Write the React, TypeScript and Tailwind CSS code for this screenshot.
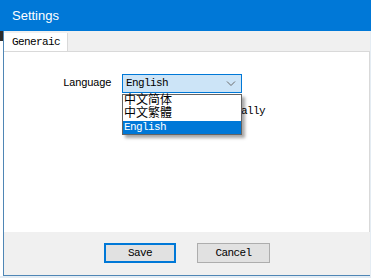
import { useState } from "react";

const mono = { fontFamily: '"Liberation Mono", "Noto Sans CJK SC", monospace' };

export default function App() {
  const [lang, setLang] = useState("English");
  const options = ["中文简体", "中文繁體", "English"];

  return (
    <div className="relative h-[278px] w-[371px] overflow-hidden bg-[#e4ecf3]">
      <div
        className="flex h-[31px] items-center bg-[#0078d7] pl-3 text-[13px] text-white"
        style={{ fontFamily: '"Liberation Sans", Arial, sans-serif' }}
      >
        Settings
      </div>

      <div className="flex">
        <div className="w-[3px] bg-white">
          <div className="h-[10px] bg-[#2b2b2b]" />
        </div>
        <div className="flex h-[245px] w-[367px] flex-col border-b border-l border-[#4f86b5] bg-[#f0f0f0]">
          {/* tabs */}
          <div className="flex h-[20px] items-end">
            <div
              className="flex h-[18px] w-[64px] items-center border-r border-[#d9d9d9] bg-white pl-[8px] text-[11px] tracking-[-0.6px] text-black"
              style={mono}
            >
              Generaic
            </div>
          </div>

          {/* panel */}
          <div className="relative h-[181px] border-r border-t border-[#d9d9d9] bg-white">
            <div className="flex items-center pt-[22px]" style={mono}>
              <span className="ml-[59px] w-[59px] text-[11px] tracking-[-0.6px] text-black">Language</span>
              <div className="relative">
                <div className="flex h-[19px] w-[120px] items-center justify-between border border-[#0078d7] bg-[#cce4f7] pl-[3px] pr-[5px] text-[11px] tracking-[-0.6px] text-black">
                  <span>{lang}</span>
                  <svg width="10" height="6" viewBox="0 0 10 6" fill="none">
                    <path d="M1 0.5 L5 4.5 L9 0.5" stroke="#6b6b6b" strokeWidth="1" />
                  </svg>
                </div>
                <div className="absolute left-0 top-[20px] z-10 w-[120px] border border-[#646464] bg-white shadow-[3px_3px_3px_rgba(0,0,0,0.35)]">
                  {options.map((o) => (
                    <div
                      key={o}
                      onClick={() => setLang(o)}
                      className={
                        o === lang
                          ? "h-[13px] bg-[#0078d7] pl-[1px] text-[11px] leading-[13px] tracking-[-0.6px] text-white"
                          : "h-[13px] pl-[1px] text-[12px] leading-[13px] text-black"
                      }
                    >
                      {o}
                    </div>
                  ))}
                </div>
              </div>
            </div>

            <div className="ml-[118px] mt-[10px] flex items-center gap-[4px]" style={mono}>
              <div className="h-[13px] w-[13px] border border-[#333] bg-white" />
              <span className="text-[11px] tracking-[-0.6px] text-black">Updates automatically</span>
            </div>
          </div>

          {/* footer */}
          <div className="flex flex-1 justify-center gap-[21px] pt-[11px]" style={mono}>
            <button className="h-[20px] w-[72px] border-2 border-[#0078d7] bg-[#e1e1e1] text-[11px] tracking-[-0.6px] text-black">
              Save
            </button>
            <button className="h-[20px] w-[73px] border border-[#adadad] bg-[#e1e1e1] text-[11px] tracking-[-0.6px] text-black">
              Cancel
            </button>
          </div>
        </div>
      </div>
    </div>
  );
}
